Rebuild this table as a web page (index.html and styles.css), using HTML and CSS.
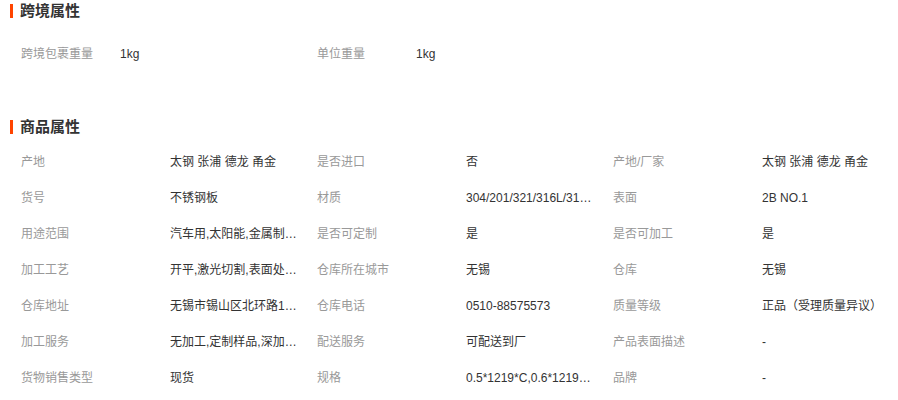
FILE: index.html
```html
<!DOCTYPE html>
<html lang="zh-CN">
<head>
    <meta charset="UTF-8">
    <title>商品属性</title>
    <link rel="stylesheet" href="styles.css">
</head>
<body>
    <div class="attrs">
        <div class="section cross">
            <h3 class="title">跨境属性</h3>
            <ul class="list cross-list">
                <li><span class="name">跨境包裹重量</span><span class="val">1kg</span></li>
                <li><span class="name">单位重量</span><span class="val">1kg</span></li>
            </ul>
        </div>

        <div class="section goods">
            <h3 class="title">商品属性</h3>
            <ul class="list">
                <li><span class="name">产地</span><span class="val">太钢 张浦 德龙 甬金</span></li>
                <li><span class="name">是否进口</span><span class="val">否</span></li>
                <li><span class="name">产地/厂家</span><span class="val">太钢 张浦 德龙 甬金</span></li>

                <li><span class="name">货号</span><span class="val">不锈钢板</span></li>
                <li><span class="name">材质</span><span class="val">304/201/321/316L/310S/2205</span></li>
                <li><span class="name">表面</span><span class="val">2B NO.1</span></li>

                <li><span class="name">用途范围</span><span class="val">汽车用,太阳能,金属制品,建筑装饰</span></li>
                <li><span class="name">是否可定制</span><span class="val">是</span></li>
                <li><span class="name">是否可加工</span><span class="val">是</span></li>

                <li><span class="name">加工工艺</span><span class="val">开平,激光切割,表面处理,折弯</span></li>
                <li><span class="name">仓库所在城市</span><span class="val">无锡</span></li>
                <li><span class="name">仓库</span><span class="val">无锡</span></li>

                <li><span class="name">仓库地址</span><span class="val">无锡市锡山区北环路158号</span></li>
                <li><span class="name">仓库电话</span><span class="val">0510-88575573</span></li>
                <li><span class="name">质量等级</span><span class="val">正品（受理质量异议）</span></li>

                <li><span class="name">加工服务</span><span class="val">无加工,定制样品,深加工,来料加工</span></li>
                <li><span class="name">配送服务</span><span class="val">可配送到厂</span></li>
                <li><span class="name">产品表面描述</span><span class="val">-</span></li>

                <li><span class="name">货物销售类型</span><span class="val">现货</span></li>
                <li><span class="name">规格</span><span class="val">0.5*1219*C,0.6*1219*C,0.8*1219*C</span></li>
                <li><span class="name">品牌</span><span class="val">-</span></li>
            </ul>
        </div>
    </div>
</body>
</html>
```

FILE: styles.css
```css
body {
    margin: 0;
    padding: 0;
    background: #fff;
    font-family: "Liberation Sans", "Noto Sans CJK SC", sans-serif;
    font-size: 12px;
    color: #333;
}

.attrs {
    padding-left: 10px;
}

.title {
    position: relative;
    margin: 0;
    height: 22px;
    line-height: 22px;
    padding-left: 10px;
    font-size: 15px;
    font-weight: bold;
    color: #333;
}

/* orange mark before the section title */
.title::before {
    content: "";
    position: absolute;
    left: 0;
    top: 4px;
    width: 3px;
    height: 14px;
    background: #ff4400;
}

.section.goods {
    margin-top: 44px;
}

.list {
    list-style: none;
    margin: 0;
    padding: 0 0 0 11px;
    display: grid;
    grid-template-columns: repeat(3, 296px);
}

.cross .list {
    margin-top: 14px;
}

.goods .list {
    margin-top: 6px;
}

.list li {
    display: flex;
    height: 36px;
    line-height: 36px;
}

.name {
    width: 149px;
    flex: none;
    color: #999;
}

.val {
    width: 128px;
    flex: none;
    white-space: nowrap;
    overflow: hidden;
    text-overflow: ellipsis;
    color: #333;
}

.cross-list .name {
    width: 99px;
}

.cross-list .val {
    width: 176px;
}
```
